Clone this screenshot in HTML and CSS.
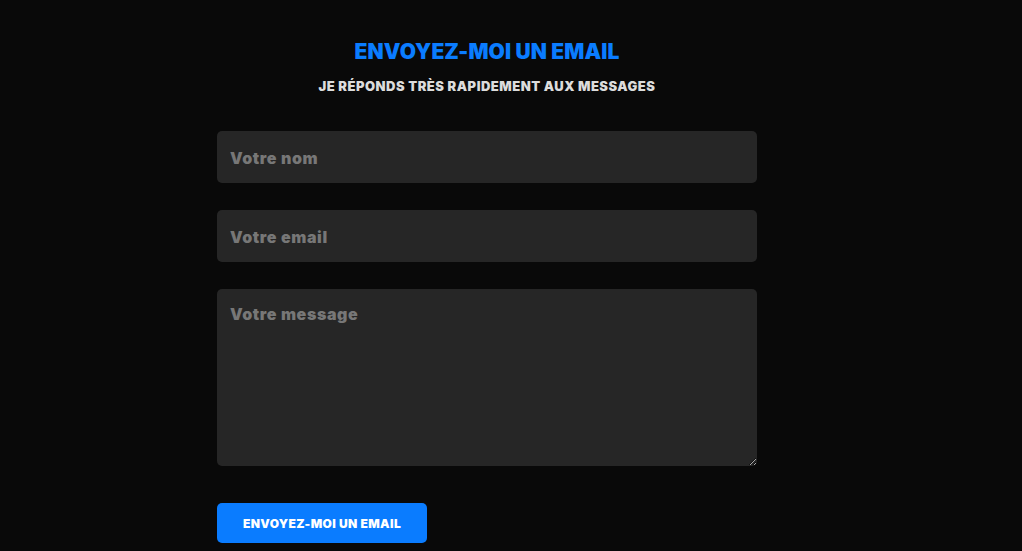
FILE: index.html
```html
<!DOCTYPE html>
<html lang="fr">
<head>
<meta charset="utf-8">
<link rel="stylesheet" href="styles.css">
</head>
<body>
<section class="contact">
  <h2 class="title">ENVOYEZ-MOI UN EMAIL</h2>
  <p class="subtitle">JE RÉPONDS TRÈS RAPIDEMENT AUX MESSAGES</p>
  <form class="form">
    <input class="field" type="text" placeholder="Votre nom">
    <input class="field" type="email" placeholder="Votre email">
    <textarea class="field area" placeholder="Votre message"></textarea>
    <button class="btn" type="button">ENVOYEZ-MOI UN EMAIL</button>
  </form>
</section>
</body>
</html>
```

FILE: styles.css
```css
html, body {
  margin: 0;
  padding: 0;
  background: #090909;
  font-family: "Inter", "Noto Sans", sans-serif;
}
.contact {
  width: 540px;
  margin-left: 217px;
  padding-top: 40px;
  display: flex;
  flex-direction: column;
}
.title {
  margin: 0;
  text-align: center;
  color: #0a7cff;
  font-size: 21px;
  font-weight: 900;
  line-height: 24px;
  letter-spacing: 0.1px;
}
.subtitle {
  margin: 14px 0 0;
  text-align: center;
  color: #dcdcdc;
  font-size: 13px;
  font-weight: 900;
  line-height: 16px;
  letter-spacing: 0.5px;
}
.form {
  margin-top: 37px;
  display: flex;
  flex-direction: column;
  gap: 27px;
}
.field {
  box-sizing: border-box;
  width: 540px;
  height: 52px;
  margin: 0;
  border: none;
  border-radius: 5px;
  background: #262626;
  padding: 2px 13px 0;
  font-family: inherit;
  font-size: 16px;
  font-weight: 900;
  letter-spacing: 0.6px;
  color: #ddd;
  outline: none;
}
.field::placeholder {
  color: #777;
}
.area {
  height: 177px;
  padding: 15px 13px;
  resize: vertical;
  display: block;
}
.btn {
  align-self: flex-start;
  margin-top: 10px;
  width: 210px;
  height: 40px;
  border: none;
  border-radius: 5px;
  background: #0a7cff;
  color: #fff;
  font-family: inherit;
  font-size: 12px;
  font-weight: 900;
  letter-spacing: 0.4px;
}
```
